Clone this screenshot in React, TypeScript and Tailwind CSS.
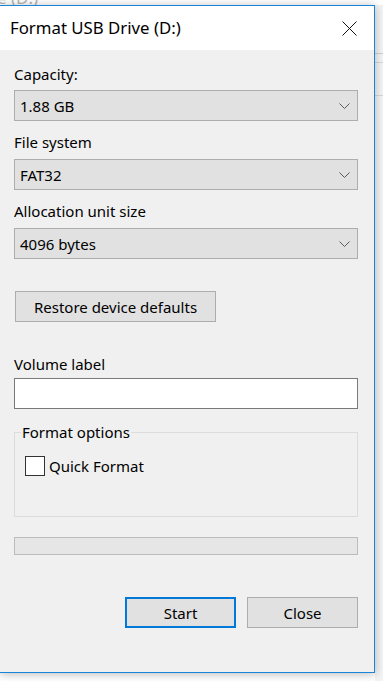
import React from 'react';

const font = { fontFamily: '"Noto Sans", "Open Sans", sans-serif' };

const Chevron: React.FC = () => (
  <svg width="11" height="6" viewBox="0 0 11 6" fill="none">
    <polyline points="0.5,0.5 5.5,5.5 10.5,0.5" stroke="#5a5a5a" strokeWidth="1" />
  </svg>
);

const Combo: React.FC<{ value: string }> = ({ value }) => (
  <div className="h-[31px] w-[344px] bg-[#e1e1e1] border border-[#adadad] flex items-center justify-between pl-[5px] pr-[7px]">
    <span className="leading-[20px]">{value}</span>
    <Chevron />
  </div>
);

const Label: React.FC<{ text: string; className?: string }> = ({ text, className = '' }) => (
  <div className={`leading-[20px] ${className}`}>{text}</div>
);

export default function App() {
  return (
    <div className="w-[383px] h-[681px] bg-white overflow-hidden flex flex-col text-black" style={font}>
      {/* window behind, cut off */}
      <div className="h-[5px] overflow-hidden shrink-0">
        <div className="text-[17px] leading-[20px] -mt-[12px] -ml-[3px] text-[#b4b4b4]">e (D:)</div>
      </div>

      <div className="flex flex-1">
        <div className="w-[375px] h-[668px] shrink-0 relative z-10 border-t border-r border-b border-[#1883d7] shadow-[0_1px_9px_rgba(0,0,0,0.28)] flex flex-col">
          {/* title bar */}
          <div className="h-[44px] bg-white flex items-center justify-between pl-[10px] pr-[17px]">
            <span className="text-[16.8px] leading-[22px]">Format USB Drive (D:)</span>
            <svg width="15" height="15" viewBox="0 0 15 15" fill="none">
              <path d="M0.5 0.5 L14.5 14.5 M14.5 0.5 L0.5 14.5" stroke="#111" strokeWidth="1" />
            </svg>
          </div>

          {/* body */}
          <div className="flex-1 bg-[#f0f0f0] pl-[14px] pt-[14px] text-[15px]">
            <Label text="Capacity:" />
            <div className="mt-[6px]">
              <Combo value="1.88 GB" />
            </div>

            <Label text="File system" className="mt-[11px]" />
            <div className="mt-[7px]">
              <Combo value="FAT32" />
            </div>

            <Label text="Allocation unit size" className="mt-[11px]" />
            <div className="mt-[7px]">
              <Combo value="4096 bytes" />
            </div>

            <button className="mt-[32px] ml-[1px] h-[31px] w-[201px] bg-[#e1e1e1] border border-[#adadad] flex items-center justify-center leading-[20px]">
              Restore device defaults
            </button>

            <Label text="Volume label" className="mt-[32px]" />
            <div className="mt-[4px] h-[31px] w-[344px] bg-white border border-[#7a7a7a]" />

            <fieldset className="mt-[13px] w-[344px] h-[95px] border border-[#dcdcdc] p-0 m-0 mx-0">
              <legend className="ml-[6px] px-[1px] leading-[20px]">Format options</legend>
              <div className="mt-[14px] ml-[10px] flex items-center h-[20px]">
                <div className="w-[20px] h-[20px] bg-white border border-[#333333] shrink-0" />
                <span className="ml-[4px] leading-[20px]">Quick Format</span>
              </div>
            </fieldset>

            <div className="mt-[20px] h-[18px] w-[344px] bg-[#e6e6e6] border border-[#bcbcbc]" />

            <div className="mt-[42px] w-[344px] flex justify-end gap-[11px]">
              <button className="h-[31px] w-[111px] bg-[#e1e1e1] border-2 border-[#0078d7] flex items-center justify-center leading-[20px]">
                Start
              </button>
              <button className="h-[31px] w-[111px] bg-[#e1e1e1] border border-[#adadad] flex items-center justify-center leading-[20px]">
                Close
              </button>
            </div>
          </div>
        </div>

        {/* background to the right */}
        <div className="flex-1 bg-[#f3f3f3] pt-[48px]">
          <div className="h-px bg-[#cfcfcf]" />
          <div className="h-px bg-[#d6d6d6] mt-[8px]" />
          <div className="h-px bg-[#d6d6d6] mt-[32px]" />
        </div>
      </div>
    </div>
  );
}
